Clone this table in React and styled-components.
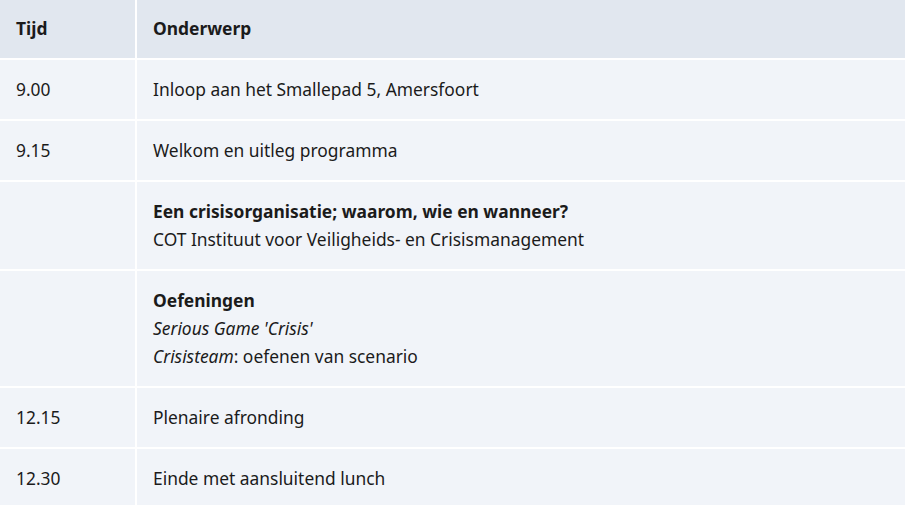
import React from "react";
import styled, { createGlobalStyle } from "styled-components";

const GlobalStyle = createGlobalStyle`
  body {
    margin: 0;
    background: #fff;
    font-family: "Noto Sans", "Open Sans", sans-serif;
    color: #1b1b1b;
  }
`;

const rows = [
  { time: "9.00", content: <>Inloop aan het Smallepad 5, Amersfoort</> },
  { time: "9.15", content: <>Welkom en uitleg programma</> },
  {
    time: "",
    content: (
      <>
        <strong>Een crisisorganisatie; waarom, wie en wanneer?</strong>
        <br />
        COT Instituut voor Veiligheids- en Crisismanagement
      </>
    ),
  },
  {
    time: "",
    content: (
      <>
        <strong>Oefeningen</strong>
        <br />
        <em>Serious Game 'Crisis'</em>
        <br />
        <em>Crisisteam</em>: oefenen van scenario
      </>
    ),
  },
  { time: "12.15", content: <>Plenaire afronding</> },
  { time: "12.30", content: <>Einde met aansluitend lunch</> },
];

const Table = styled.table`
  width: 100%;
  border-collapse: separate;
  border-spacing: 0;
  font-size: 17.4px;
  line-height: 28px;
`;

const HeadCell = styled.th`
  background: #e1e7ef;
  text-align: left;
  font-weight: 700;
  padding: 14px 16px 16px;
  border-bottom: 2px solid #fff;
  border-left: ${(p) => (p.$first ? "0" : "2px solid #fff")};
  width: ${(p) => (p.$first ? "103px" : "auto")};
`;

const Cell = styled.td`
  background: #f1f4f9;
  vertical-align: top;
  padding: 15px 16px 16px 16px;
  border-bottom: 2px solid #fff;
  border-left: ${(p) => (p.$first ? "0" : "2px solid #fff")};

  strong {
    font-weight: 700;
  }
`;

export default function App() {
  return (
    <>
      <GlobalStyle />
      <Table>
        <thead>
          <tr>
            <HeadCell $first>Tijd</HeadCell>
            <HeadCell>Onderwerp</HeadCell>
          </tr>
        </thead>
        <tbody>
          {rows.map((row, i) => (
            <tr key={i}>
              <Cell $first>{row.time}</Cell>
              <Cell>{row.content}</Cell>
            </tr>
          ))}
        </tbody>
      </Table>
    </>
  );
}
